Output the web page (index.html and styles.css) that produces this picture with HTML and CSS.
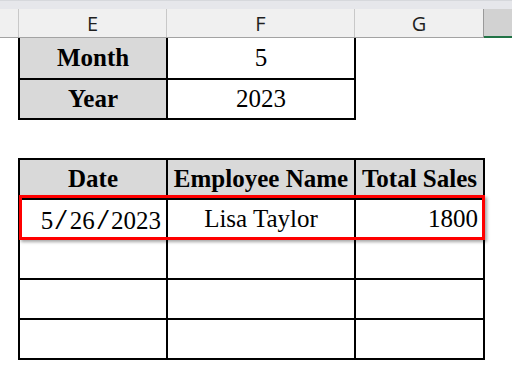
FILE: index.html
```html
<!DOCTYPE html>
<html lang="en">
<head>
<meta charset="utf-8">
<title>Sheet</title>
<link rel="stylesheet" href="styles.css">
</head>
<body>
<div class="sheet">
  <div class="topbar"></div>
  <div class="colheads">
    <div class="ch ch-corner"></div>
    <div class="ch ch-e">E</div>
    <div class="ch ch-f">F</div>
    <div class="ch ch-g">G</div>
    <div class="ch ch-h"></div>
  </div>
  <div class="grid">
    <table class="t t1">
      <tr class="r-first">
        <td class="c-e lbl">Month</td>
        <td class="c-f ctr">5</td>
      </tr>
      <tr>
        <td class="c-e lbl">Year</td>
        <td class="c-f ctr">2023</td>
      </tr>
    </table>
    <table class="t t2">
      <tr class="r-hdr">
        <td class="c-e lbl">Date</td>
        <td class="c-f lbl">Employee Name</td>
        <td class="c-g lbl">Total Sales</td>
      </tr>
      <tr>
        <td class="c-e num">5<span class="sl">/</span>26<span class="sl">/</span>2023</td>
        <td class="c-f ctr">Lisa Taylor</td>
        <td class="c-g num">1800</td>
      </tr>
      <tr><td class="c-e"></td><td class="c-f"></td><td class="c-g"></td></tr>
      <tr><td class="c-e"></td><td class="c-f"></td><td class="c-g"></td></tr>
      <tr><td class="c-e"></td><td class="c-f"></td><td class="c-g"></td></tr>
    </table>
    <div class="highlight"></div>
  </div>
</div>
</body>
</html>
```

FILE: styles.css
```css
html, body {
  margin: 0;
  padding: 0;
  background: #ffffff;
}
.sheet {
  width: 512px;
  height: 385px;
  overflow: hidden;
  position: relative;
}
.topbar {
  height: 9px;
  background: #e6e7eb;
  border-top: 1px solid #d6d8dc;
  box-sizing: border-box;
}
.colheads {
  display: flex;
  height: 29px;
  background: #f0f0f0;
  border-bottom: 1px solid #a3a3a3;
  box-sizing: border-box;
  font-family: "Open Sans", "Noto Sans", sans-serif;
  font-size: 20px;
  color: #1f1f1f;
}
.ch {
  box-sizing: border-box;
  border-right: 1px solid #c8c8c8;
  text-align: center;
  line-height: 27px;
  padding-top: 1px;
  flex: none;
}
.ch-corner { width: 19px; }
.ch-e { width: 148px; }
.ch-f { width: 188px; }
.ch-g { width: 129px; border-right-color: #9a9a9a; }
.ch-h {
  flex: 1;
  border-right: none;
  background: #d2d2d2;
  border-bottom: 2px solid #217346;
  height: 29px;
  margin-bottom: -1px;
}
.grid {
  position: relative;
  padding-left: 18px;
  font-family: "Liberation Serif", "Times New Roman", serif;
  font-size: 25px;
  color: #000000;
}
.t {
  border-collapse: separate;
  border-spacing: 0;
  table-layout: fixed;
}
.t1 { width: 338px; margin-bottom: 38px; }
.t2 { width: 467px; }
.t td {
  box-sizing: border-box;
  border-right: 2px solid #000;
  border-bottom: 2px solid #000;
  padding: 0 5px;
  vertical-align: middle;
  white-space: nowrap;
  overflow: hidden;
}
.t td:first-child { border-left: 2px solid #000; }
.t tr { height: 40px; }
.t1 .r-first { height: 42px; }
.t2 .r-hdr { height: 42px; }
.t2 .r-hdr td { border-top: 2px solid #000; }
.c-e { width: 150px; }
.c-f { width: 188px; }
.c-g { width: 129px; }
.lbl {
  background: #d9d9d9;
  font-weight: bold;
  text-align: center;
}
.ctr { text-align: center; }
.num { text-align: right; }
.sl {
  display: inline-block;
  font-size: 30px;
  line-height: 1;
  margin: 0 4px;
  transform: scaleX(1.4);
}
.highlight {
  position: absolute;
  left: 19px;
  top: 157px;
  width: 466px;
  height: 45px;
  box-sizing: border-box;
  border: 3px solid #ff0000;
  box-shadow: 2px 2px 3px rgba(0, 0, 0, 0.35);
}
```
